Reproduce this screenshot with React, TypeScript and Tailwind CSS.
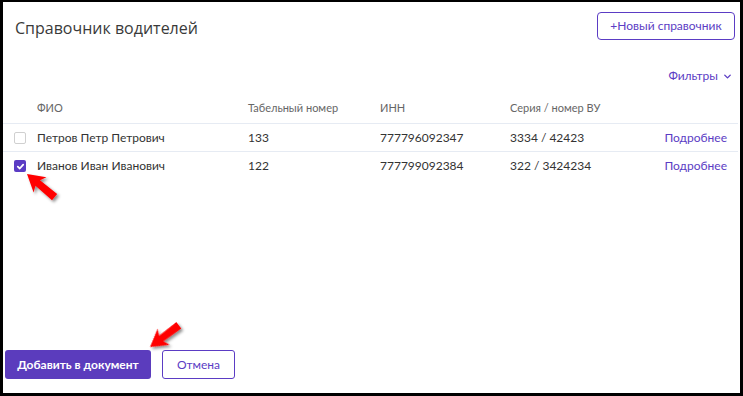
import { ChevronDown } from 'lucide-react'

const drivers = [
  { name: 'Петров Петр Петрович', tab: '133', inn: '777796092347', vu: '3334 / 42423', checked: false },
  { name: 'Иванов Иван Иванович', tab: '122', inn: '777799092384', vu: '322 / 3424234', checked: true },
]

const cols = 'grid grid-cols-[23px_211px_132px_130px_1fr_auto] items-center pl-[11px] pr-[11px]'

function Checkbox({ checked }: { checked: boolean }) {
  if (checked) {
    return (
      <span className="flex w-[12px] h-[12px] items-center justify-center rounded-[2px] bg-[#5b3cc4]">
        <svg width="9" height="9" viewBox="0 0 10 10" fill="none" stroke="white" strokeWidth="2" strokeLinecap="round" strokeLinejoin="round">
          <polyline points="2 5.2 4.2 7.2 8 3" />
        </svg>
      </span>
    )
  }
  return <span className="block w-[12px] h-[12px] rounded-[2px] border border-[#d0d0d0] bg-white" />
}

function Arrow({ x, y, angle }: { x: number; y: number; angle: number }) {
  return (
    <g transform={`translate(${x},${y}) rotate(${angle})`}>
      <polygon points="0,0 17,-10 14,-3.5 36,-4 36,4 14,3.5 17,10" fill="#ff0000" />
    </g>
  )
}

export default function App() {
  return (
    <div className="relative w-[743px] h-[396px] bg-white font-['Lato',sans-serif] text-[#333]">
      <div className="flex flex-col h-full border-l-[3px] border-r-[3px] border-t-2 border-b-[3px] border-black">
        <div className="flex items-start justify-between pl-3 pr-[5px] pt-[10px]">
          <h1 className="mt-[4px] font-['Open_Sans',sans-serif] text-[16px] leading-[24px] text-[#3a3a3a]">
            Справочник водителей
          </h1>
          <button className="h-[28px] w-[138px] rounded-[4px] border border-[#5b3cc4] text-[12px] text-[#5b3cc4]">
            +Новый справочник
          </button>
        </div>

        <div className="flex justify-end items-center gap-1 pr-[7px] mt-[27px] text-[12px] text-[#5b3cc4]">
          Фильтры
          <ChevronDown size={11} strokeWidth={3} />
        </div>

        <div className="mt-[9px] mr-[2px]">
          <div className={`${cols} h-[30px] border-b border-[#e6ebf3] text-[11px] text-[#666]`}>
            <span />
            <span>ФИО</span>
            <span>Табельный номер</span>
            <span>ИНН</span>
            <span>Серия / номер ВУ</span>
            <span />
          </div>
          {drivers.map((d, i) => (
            <div
              key={d.inn}
              className={`${cols} h-[28px] text-[12px] ${i === 0 ? 'border-b border-[#e6ebf3]' : ''}`}
            >
              <Checkbox checked={d.checked} />
              <span>{d.name}</span>
              <span>{d.tab}</span>
              <span>{d.inn}</span>
              <span>{d.vu}</span>
              <span className="text-[#5b3cc4]">Подробнее</span>
            </div>
          ))}
        </div>

        <div className="mt-auto flex gap-[11px] pl-[2px] pb-[14px]">
          <button className="h-[29px] w-[146px] rounded-[3px] bg-[#5b3cbd] text-[12px] font-bold text-white">
            Добавить в документ
          </button>
          <button className="h-[29px] w-[73px] rounded-[3px] border border-[#5b3cc4] text-[12px] text-[#5b3cc4]">
            Отмена
          </button>
        </div>
      </div>

      <svg className="absolute inset-0 pointer-events-none" width="743" height="396">
        <defs>
          <filter id="sh" x="-50%" y="-50%" width="200%" height="200%">
            <feDropShadow dx="2" dy="2" stdDeviation="1.5" floodColor="#000" floodOpacity="0.45" />
          </filter>
        </defs>
        <g filter="url(#sh)">
          <Arrow x={27} y={174} angle={40} />
          <Arrow x={150} y={347} angle={-37} />
        </g>
      </svg>
    </div>
  )
}
